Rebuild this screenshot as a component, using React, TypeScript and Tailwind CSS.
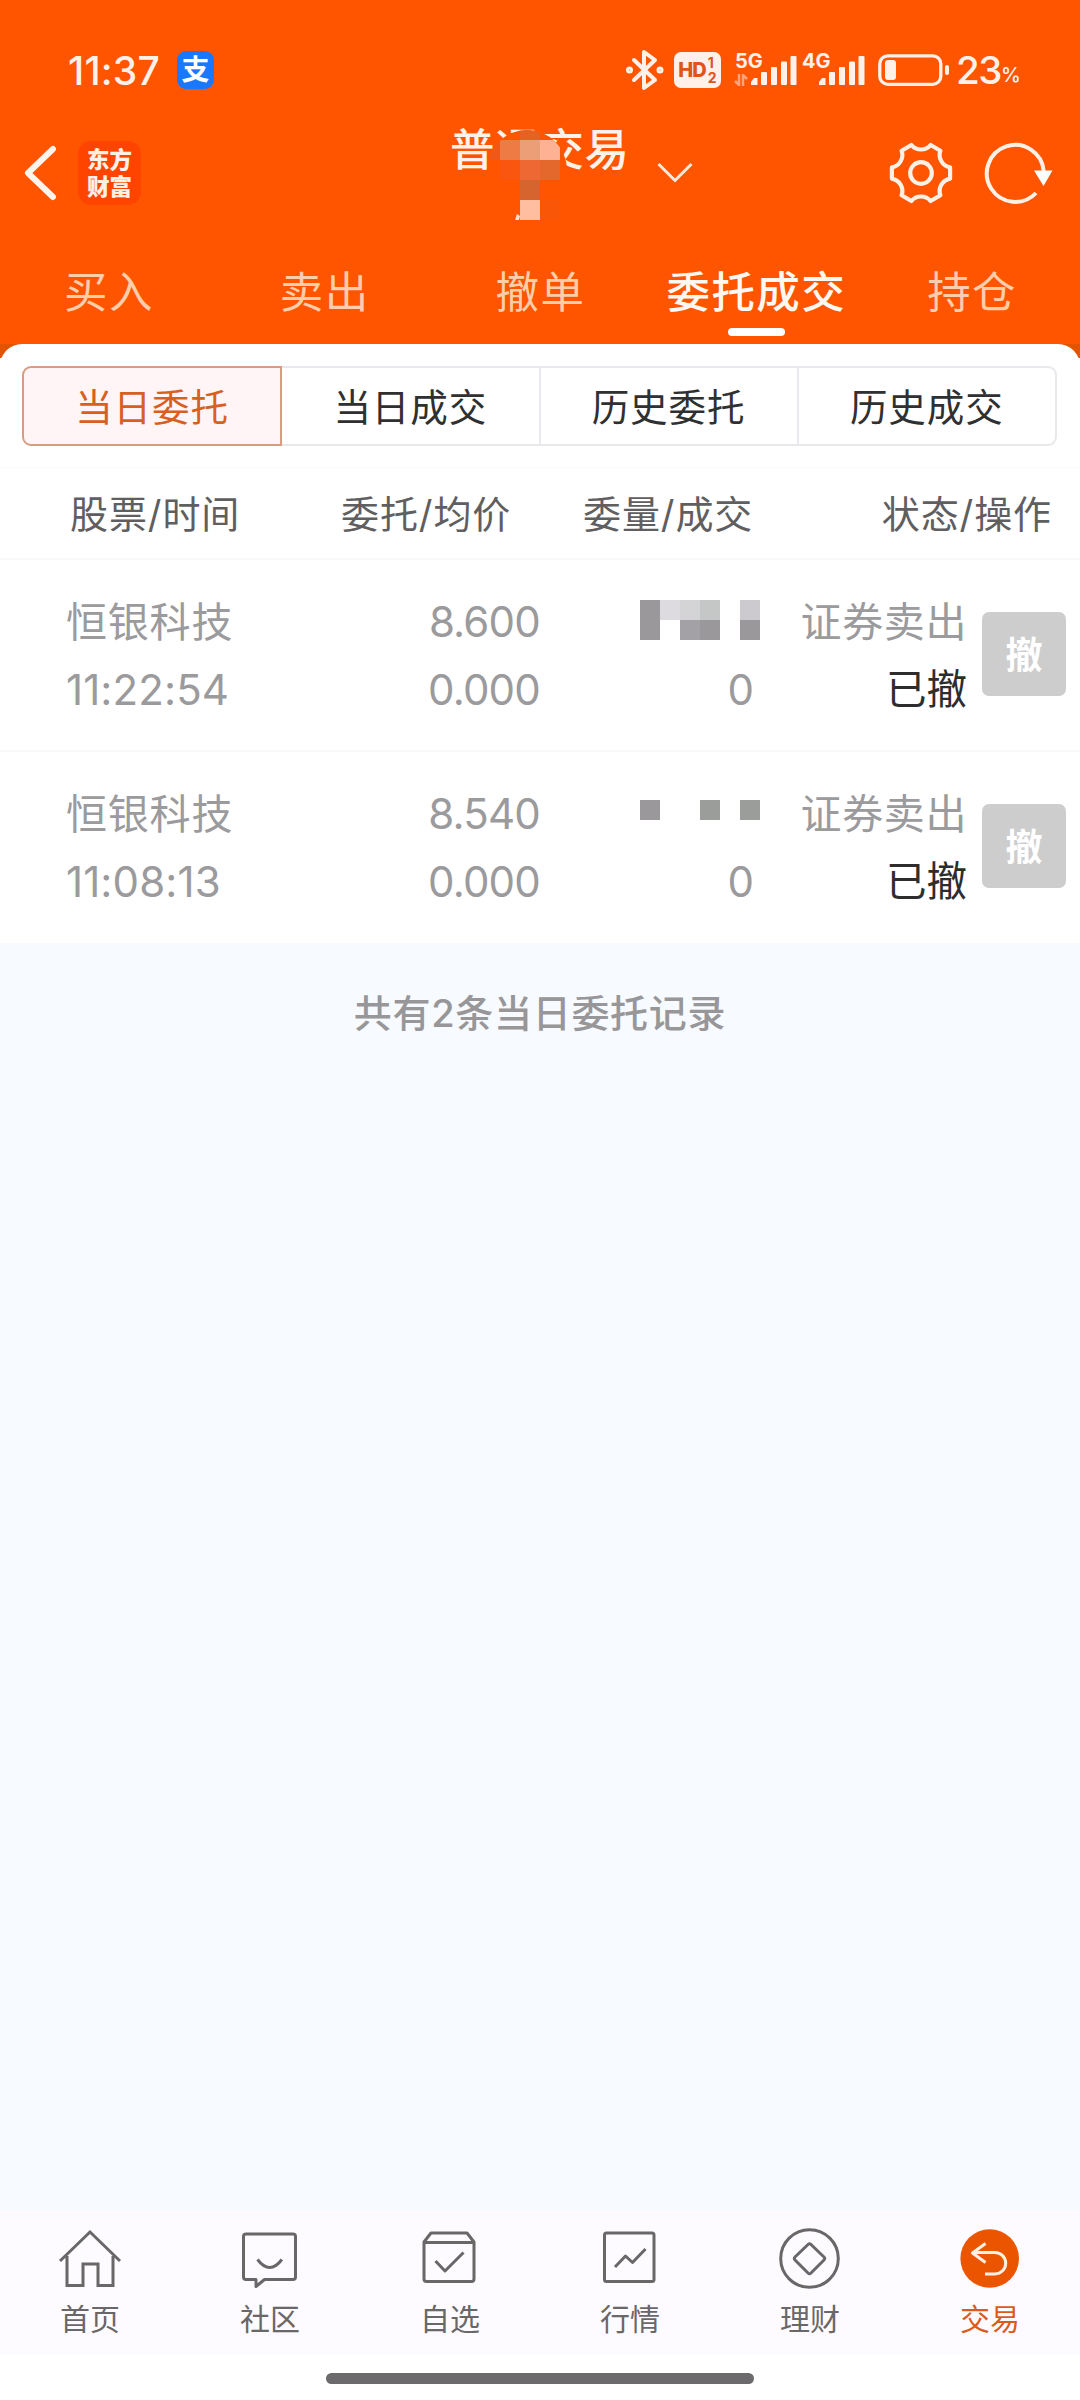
import type { ReactNode } from "react";

const tabs = ["买入", "卖出", "撤单", "委托成交", "持仓"];
const segments = ["当日委托", "当日成交", "历史委托", "历史成交"];

type Cell = { x: number; y: number; fill: string };

const orders: {
  name: string;
  time: string;
  price: string;
  avg: string;
  cells: Cell[];
}[] = [
  {
    name: "恒银科技",
    time: "11:22:54",
    price: "8.600",
    avg: "0.000",
    cells: [
      { x: 0, y: 0, fill: "#9b989b" },
      { x: 20, y: 0, fill: "#dddbdf" },
      { x: 40, y: 0, fill: "#d4d3d6" },
      { x: 60, y: 0, fill: "#c5c6c6" },
      { x: 100, y: 0, fill: "#cccacf" },
      { x: 0, y: 20, fill: "#9b989b" },
      { x: 40, y: 20, fill: "#a3a1a5" },
      { x: 60, y: 20, fill: "#9b989b" },
      { x: 100, y: 20, fill: "#9b989b" },
    ],
  },
  {
    name: "恒银科技",
    time: "11:08:13",
    price: "8.540",
    avg: "0.000",
    cells: [
      { x: 0, y: 8, fill: "#9b989b" },
      { x: 60, y: 8, fill: "#9b9d9b" },
      { x: 100, y: 8, fill: "#9b9d9b" },
    ],
  },
];

// six teeth, one concave notch between each pair
function gearPath(c: number) {
  const p = (deg: number, r: number) => {
    const a = (deg * Math.PI) / 180;
    return `${(c + r * Math.cos(a)).toFixed(1)} ${(c + r * Math.sin(a)).toFixed(1)}`;
  };
  let d = "";
  for (let k = 0; k < 6; k++) {
    const a = 30 + 60 * k;
    d += `${k === 0 ? "M" : "L"}${p(a - 19, 29.6)} C${p(a - 12, 22.5)} ${p(a + 12, 22.5)} ${p(a + 19, 29.6)} `;
  }
  return d + "Z";
}

function Signal() {
  return (
    <svg width="46" height="30" viewBox="0 0 46 30" fill="#fff0ea">
      <path d="M0 29v-3l3-4h3.500v7z" />
      <rect x="10" y="16" width="6" height="13" rx="1" />
      <rect x="20" y="11" width="6" height="18" rx="1" />
      <rect x="30" y="5.500" width="6" height="23.500" rx="1" />
      <rect x="39.500" y="0" width="6" height="29" rx="1" />
    </svg>
  );
}

function StatusBar() {
  return (
    <div className="flex h-[140px] items-center text-[#fff0ea]">
      <span className="ml-[68px] w-[109px] pt-[2px] text-[39px] font-medium tracking-[0.2px]">11:37</span>
      <span className="flex h-[38px] w-[37px] items-center justify-center rounded-[9px] bg-[#1a78ff] text-[28px] leading-none font-bold text-white">
        支
      </span>
      <svg className="ml-[412px]" width="38" height="42" viewBox="0 0 38 42" fill="none" stroke="#fff0ea" strokeWidth="4" strokeLinejoin="round" strokeLinecap="round">
        <path d="M8 11l21 20-11 8V3l11 8L8 31" />
        <circle cx="3.500" cy="21" r="1.500" />
        <circle cx="34" cy="21" r="1.500" />
      </svg>
      <span className="ml-[10px] flex h-[36px] w-[47px] items-center justify-center rounded-[7px] bg-[#fff0ea] text-[#e0531a]">
        <span className="text-[20px] leading-[24px] font-extrabold tracking-[-1px]">HD</span>
        <span className="ml-[2px] flex flex-col text-[14px] font-bold">
          <span className="h-[15px] leading-[15px]">1</span>
          <span className="h-[15px] leading-[15px]">2</span>
        </span>
      </span>
      <span className="relative ml-[30px] flex h-[40px] items-end pb-[4px]">
        <Signal />
        <span className="absolute top-[1px] left-[-16px] text-[20px] leading-[20px] font-bold">5G</span>
        <svg className="absolute bottom-[4px] left-[-17px]" width="14" height="12" viewBox="0 0 14 12" fill="none" stroke="#ffa47a" strokeWidth="2.500">
          <path d="M1 7l4 4V0M13 5L9 1v11" />
        </svg>
      </span>
      <span className="relative ml-[22px] flex h-[40px] items-end pb-[4px]">
        <Signal />
        <span className="absolute top-[1px] left-[-17px] text-[20px] leading-[20px] font-bold">4G</span>
      </span>
      <svg className="ml-[13px]" width="72" height="32" viewBox="0 0 72 32">
        <rect x="1.800" y="1.800" width="61" height="28.500" rx="8" fill="none" stroke="#fff0ea" strokeWidth="3.300" />
        <rect x="7" y="6" width="11" height="20" rx="3" fill="#fff0ea" />
        <rect x="67" y="11" width="4" height="10" rx="2" fill="#fff0ea" />
      </svg>
      <span className="ml-[6px] pt-[2px] text-[38.5px] font-medium tracking-[-1.5px]">23</span>
      <span className="pt-[10px] text-[20px] font-medium">%</span>
    </div>
  );
}

function TitleMask() {
  return (
    <svg className="absolute top-[3px] left-[30px]" width="90" height="90" viewBox="480 130 90 90">
      <defs>
        <clipPath id="blob">
          <path d="M487 170a40 40 0 0 1 80 0v50h-80z" />
        </clipPath>
      </defs>
      <g clipPath="url(#blob)">
        <rect x="480" y="130" width="90" height="90" fill="#ff5500" />
        <rect x="520" y="130" width="20" height="10" fill="#e66222" />
        <rect x="480" y="140" width="20" height="20" fill="#f0581a" />
        <rect x="500" y="140" width="20" height="20" fill="#ee7a44" />
        <rect x="520" y="140" width="20" height="20" fill="#ec9f76" />
        <rect x="540" y="140" width="20" height="20" fill="#ffb293" />
        <rect x="500" y="160" width="20" height="20" fill="#fb5610" />
        <rect x="520" y="160" width="20" height="20" fill="#ee6833" />
        <rect x="540" y="160" width="20" height="20" fill="#e4682b" />
        <rect x="520" y="180" width="20" height="20" fill="#d5642f" />
        <rect x="520" y="200" width="20" height="20" fill="#ffbe9f" />
        <rect x="540" y="200" width="20" height="20" fill="#f95707" />
      </g>
      <path d="M515 220l2-6 3 2-1 4z" fill="#ffe0cc" />
    </svg>
  );
}

function TitleBar() {
  return (
    <div className="flex h-[66px] items-center">
      <svg className="ml-[22px]" width="36" height="56" viewBox="0 0 36 56" fill="none" stroke="#fff5ec" strokeWidth="6" strokeLinecap="round" strokeLinejoin="round">
        <path d="M31 4L6 28l25 24" />
      </svg>
      <div className="ml-[20px] flex h-[64px] w-[63px] flex-col items-center justify-center rounded-[13px] bg-[#ff4400] text-[22.5px] leading-[27px] font-black text-[#fff0e6]">
        <span>东方</span>
        <span>财富</span>
      </div>
      <div className="relative ml-[309px] h-[92px] w-[180px] text-[44.500px] leading-[46px] font-medium tracking-[0.3px] text-[#fff2ea]">
        <div className="whitespace-nowrap">普通交易</div>
        <TitleMask />
      </div>
      <svg className="ml-[26px]" width="38" height="22" viewBox="0 0 38 22" fill="none" stroke="#ffe9dc" strokeWidth="3">
        <path d="M2.500 2L19 18.500 35.500 2" />
      </svg>
      <svg className="ml-[194px]" width="66" height="66" viewBox="0 0 66 66" fill="none" stroke="#fff0e6" strokeWidth="4.200" strokeLinejoin="round">
        <path d={gearPath(33)} />
        <circle cx="33" cy="33" r="10.800" />
      </svg>
      <svg className="ml-[29px]" width="74" height="66" viewBox="0 0 74 66" fill="none">
        <path d="M60.700 31A28.500 28.500 0 1 0 53 53" stroke="#fff0e6" strokeWidth="4" />
        <path d="M51 30.500h18.500L60.500 46z" fill="#fff" />
      </svg>
    </div>
  );
}

function Tabs() {
  return (
    <div className="grid h-[138px] grid-cols-5 pt-[56px] pl-px text-[43.500px] leading-[60px] tracking-[1.4px]">
      {tabs.map((t) => {
        const active = t === "委托成交";
        return (
          <div key={t} className={active ? "flex flex-col items-center whitespace-nowrap text-[#fff8f2]" : "flex flex-col items-center text-[#ffcdaa]"}>
            <span className={active ? "font-medium" : ""}>{t}</span>
            {active && <span className="mt-[6px] h-[8px] w-[57px] rounded-full bg-white" />}
          </div>
        );
      })}
    </div>
  );
}

function OrderRow({ order }: { order: (typeof orders)[number] }) {
  return (
    <div className="flex h-[192px] border-t-2 border-[#f9f9fa] pt-[31px] text-[#9b9a9c]">
      <div className="-mt-[2px] w-[300px] pl-[66px] leading-[67px]">
        <div className="text-[41px] tracking-[0.8px]">{order.name}</div>
        <div className="text-[42px] tracking-[0.1px]">{order.time}</div>
      </div>
      <div className="-mt-[3px] w-[240px] text-right text-[42px] leading-[67.500px] tracking-[-0.8px]">
        <div>{order.price}</div>
        <div>{order.avg}</div>
      </div>
      <div className="flex w-[220px] flex-col items-end">
        <div className="flex h-[65px] items-start pt-[9px]">
          <svg width="120" height="40" viewBox="0 0 120 40">
            {order.cells.map((c) => (
              <rect key={`${c.x}-${c.y}`} x={c.x} y={c.y} width="20" height="20" fill={c.fill} />
            ))}
          </svg>
        </div>
        <div className="pr-[6px] text-[42px] leading-[67px]">0</div>
      </div>
      <div className="-mt-[2px] w-[207px] text-right leading-[67px]">
        <div className="text-[41px] tracking-[0.6px]">证券卖出</div>
        <div className="text-[40.500px] text-[#2d2d2f]">已撤</div>
      </div>
      <button className="mt-[21px] ml-[15px] h-[84px] w-[84px] rounded-[7px] bg-[#cdcdcd] pt-[4px] text-[37px] leading-[80px] font-bold text-white">
        撤
      </button>
    </div>
  );
}

function NavItem({ label, active, children }: { label: string; active?: boolean; children: ReactNode }) {
  return (
    <div className={active ? "flex flex-col items-center text-[#dc5a1c]" : "flex flex-col items-center text-[#6a6769]"}>
      <svg width="66" height="66" viewBox="0 0 66 66" fill="none" stroke="currentColor" strokeWidth="3" strokeLinejoin="round">
        {children}
      </svg>
      <span className="mt-[8px] text-[30px] leading-[40px]">{label}</span>
    </div>
  );
}

export default function App() {
  return (
    <div className="flex h-[2400px] w-[1080px] flex-col overflow-hidden bg-white font-['Inter','Noto_Sans_CJK_SC',sans-serif]">
      <header className="h-[344px] bg-[#ff5500]">
        <StatusBar />
        <TitleBar />
        <Tabs />
      </header>

      <div className="bg-[linear-gradient(#e25400_14px,#ffffff_14px)]">
        <section className="rounded-t-[22px] bg-white pb-px">
          <div className="pt-[22px] pr-[23px] pl-[22px]">
            <div className="flex h-[80px] rounded-[9px] text-[37.500px] leading-[79px] tracking-[1px] text-[#2f3031]">
              {segments.map((s, i) => (
                <div
                  key={s}
                  className={
                    i === 0
                      ? "flex-1 rounded-l-[9px] border-2 border-[#d99c80] bg-[#fff5f6] text-center text-[#d8601f]"
                      : i === 3
                        ? "flex-1 rounded-r-[9px] border-2 border-l-0 border-[#e9e8ec] text-center"
                        : "flex-1 border-y-2 border-r-2 border-[#e9e8ec] text-center"
                  }
                >
                  {s}
                </div>
              ))}
            </div>
          </div>

          <div className="mt-[21px] flex h-[91px] items-center border-t border-[#fbfbfb] pt-[3px] text-[38px] tracking-[0.9px] whitespace-nowrap text-[#5f5e60]">
            <span className="w-[271px] pl-[70px]">股票/时间</span>
            <span className="w-[242px] pl-[70px]">委托/均价</span>
            <span className="w-[240px] pl-[70px]">委量/成交</span>
            <span className="flex-1 pr-[28px] text-right">状态/操作</span>
          </div>

          {orders.map((o) => (
            <OrderRow key={o.time} order={o} />
          ))}
        </section>
      </div>

      <main className="flex-1 bg-[#f7faff] pt-[46px] text-center text-[38px] leading-[48px] font-medium tracking-[0.7px] text-[#979698]">
        共有2条当日委托记录
      </main>

      <nav className="grid h-[145px] grid-cols-6 bg-[#fdfbff] pt-[15px]">
        <NavItem label="首页">
          <path d="M3 36L33 7l30 29M10 31v29.500h16V39h15v21.500h15V31" strokeLinejoin="miter" />
        </NavItem>
        <NavItem label="社区">
          <path d="M9 9h47q2.500 0 2.500 2.500V52q0 2.500-2.500 2.500H27.500L19 61.500v-7H9q-2.500 0-2.500-2.500V11.500Q6.500 9 9 9z" />
          <path d="M20.500 34.500q12.200 16 24.400 0" />
        </NavItem>
        <NavItem label="自选">
          <path d="M7 17l7-9h36l7 9v37q0 2.500-2.500 2.500h-45Q7 56.500 7 54z" />
          <path d="M7 17.500h50" />
          <path d="M18.500 36L28 46l18.500-18.500" />
        </NavItem>
        <NavItem label="行情">
          <rect x="7.500" y="8" width="49.500" height="48.500" rx="2" />
          <path d="M18 42l10.500-11 7 6.500L48.500 24" />
        </NavItem>
        <NavItem label="理财">
          <circle cx="32.500" cy="33.500" r="28.800" />
          <path d="M31 19.500q1.500-1.500 3 0L47 32q1.500 1.500 0 3L34 48q-1.500 1.500-3 0L18 35q-1.500-1.500 0-3z" />
        </NavItem>
        <NavItem label="交易" active>
          <circle cx="32.700" cy="33.500" r="29.300" fill="#ec5500" stroke="none" />
          <path d="M28.500 18.500L15.500 28l13 9.500M15.500 27.500H38a10.700 10.700 0 0 1 0 21.400H28" stroke="#fff0e6" strokeWidth="3" />
        </NavItem>
      </nav>

      <div className="flex h-[45px] justify-center pt-[18px]">
        <div className="h-[11px] w-[428px] rounded-full bg-[#6d6a6d]" />
      </div>
    </div>
  );
}
